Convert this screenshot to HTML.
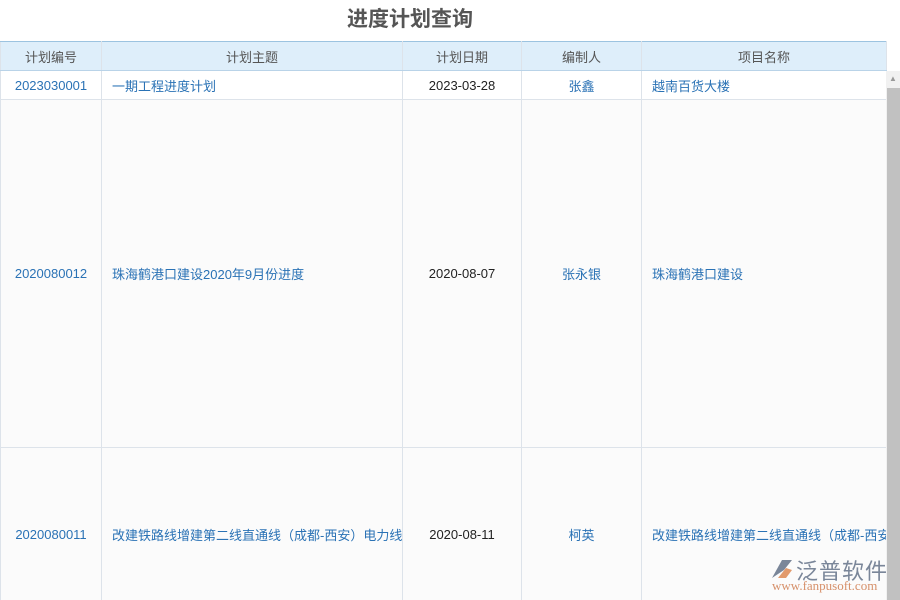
<!DOCTYPE html>
<html style="overflow:hidden;height:600px"><head><meta charset="utf-8"><style>
body{margin:0;width:900px;height:600px;overflow:hidden;background:#fff;font-family:"Liberation Sans","Noto Sans CJK SC",sans-serif;font-size:13px;position:relative}
.t{position:absolute;top:3px;left:0;width:820px;text-align:center;font-size:21px;font-weight:bold;color:#555}
table{position:absolute;top:41px;left:0;border-collapse:collapse;table-layout:fixed;width:886px}
td,th{border:1px solid #dde3ea;padding:0;white-space:nowrap;overflow:hidden}
th{background:#deeefa;color:#555;font-weight:normal;height:28px;border-top:1px solid #9cc3e0;border-bottom:1px solid #b9d3e8}
td{color:#2a72b5;background:#fbfbfb}
.c{text-align:center}.l{padding-left:10px}.k{color:#222}
.sb{position:absolute;left:886px;top:71px;width:14px;height:529px;background:#f1f1f1}
.th{position:absolute;left:887px;top:88px;width:13px;height:512px;background:#c1c1c1}
</style></head><body>
<div class="t">进度计划查询</div>
<table>
<colgroup><col style="width:101px"><col style="width:301px"><col style="width:119px"><col style="width:120px"><col style="width:245px"></colgroup>
<tr><th>计划编号</th><th>计划主题</th><th>计划日期</th><th>编制人</th><th>项目名称</th></tr>
<tr style="height:29px"><td class="c" style="background:#fff">2023030001</td><td class="l" style="background:#fff">一期工程进度计划</td><td class="c k" style="background:#fff">2023-03-28</td><td class="c" style="background:#fff">张鑫</td><td class="l" style="background:#fff">越南百货大楼</td></tr>
<tr style="height:348px"><td class="c">2020080012</td><td class="l">珠海鹤港口建设2020年9月份进度</td><td class="c k">2020-08-07</td><td class="c">张永银</td><td class="l">珠海鹤港口建设</td></tr>
<tr style="height:174px"><td class="c">2020080011</td><td class="l">改建铁路线增建第二线直通线（成都-西安）电力线</td><td class="c k">2020-08-11</td><td class="c">柯英</td><td class="l">改建铁路线增建第二线直通线（成都-西安）</td></tr>
</table>
<div class="sb"></div><div class="th"></div>
<div style="position:absolute;left:889px;top:74px;font-size:8px;color:#999">▲</div>
<svg style="position:absolute;left:770px;top:556px" width="24" height="24"><path d="M2 22 L12 4 L22 4 L14 14 Z" fill="#7a8699"/><path d="M8 22 L16 12 L22 14 L16 22 Z" fill="#e29a6c"/></svg>
<div style="position:absolute;left:796px;top:554px;font-size:22px;color:#7a8699;letter-spacing:1px">泛普软件</div>
<div style="position:absolute;left:772px;top:578px;font-size:13px;color:#d6906a;font-family:'Liberation Serif',serif">www.fanpusoft.com</div>
</body></html>
